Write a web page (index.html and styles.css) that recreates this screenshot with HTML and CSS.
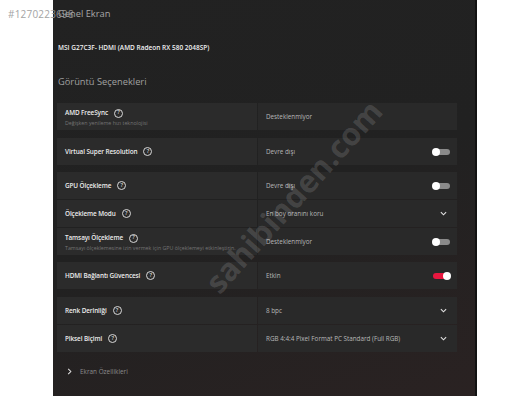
FILE: index.html
```html
<!DOCTYPE html>
<html lang="tr">
<head>
<meta charset="utf-8">
<link rel="stylesheet" href="styles.css">
</head>
<body>
<div class="panel">
  <div class="title">Genel Ekran</div>
  <div class="device">MSI G27C3F- HDMI (AMD Radeon RX 580 2048SP)</div>
  <div class="section">Görüntü Seçenekleri</div>

  <div class="group g8">
    <div class="row">
      <div class="lab two"><div class="name">AMD FreeSync <span class="help">?</span></div><div class="sub">Değişken yenileme hızı teknolojisi</div></div>
      <div class="val"><span>Desteklenmiyor</span></div>
    </div>
  </div>

  <div class="group">
    <div class="row">
      <div class="lab"><div class="name">Virtual Super Resolution <span class="help">?</span></div></div>
      <div class="val"><span>Devre dışı</span><span class="tog"></span></div>
    </div>
  </div>

  <div class="group">
    <div class="row">
      <div class="lab"><div class="name">GPU Ölçekleme <span class="help">?</span></div></div>
      <div class="val"><span>Devre dışı</span><span class="tog"></span></div>
    </div>
    <div class="row">
      <div class="lab"><div class="name">Ölçekleme Modu <span class="help">?</span></div></div>
      <div class="val"><span>En boy oranını koru</span><svg class="chev" viewBox="0 0 8 5"><path d="M1 1 L4 4 L7 1" /></svg></div>
    </div>
    <div class="row">
      <div class="lab two"><div class="name">Tamsayı Ölçekleme <span class="help">?</span></div><div class="sub">Tamsayı ölçeklemesine izin vermek için GPU ölçeklemeyi etkinleştirin.</div></div>
      <div class="val"><span>Desteklenmiyor</span><span class="tog"></span></div>
    </div>
  </div>

  <div class="group g8">
    <div class="row">
      <div class="lab"><div class="name">HDMI Bağlantı Güvencesi <span class="help">?</span></div></div>
      <div class="val"><span>Etkin</span><span class="tog on"></span></div>
    </div>
  </div>

  <div class="group">
    <div class="row">
      <div class="lab"><div class="name">Renk Derinliği <span class="help">?</span></div></div>
      <div class="val"><span>8 bpc</span><svg class="chev" viewBox="0 0 8 5"><path d="M1 1 L4 4 L7 1" /></svg></div>
    </div>
    <div class="row">
      <div class="lab"><div class="name">Piksel Biçimi <span class="help">?</span></div></div>
      <div class="val"><span>RGB 4:4:4 Pixel Format PC Standard (Full RGB)</span><svg class="chev" viewBox="0 0 8 5"><path d="M1 1 L4 4 L7 1" /></svg></div>
    </div>
  </div>

  <div class="more"><svg class="rchev" viewBox="0 0 5 8"><path d="M1 1 L4 4 L1 7" /></svg><span>Ekran Özellikleri</span></div>
</div>
<div class="wm-id">#1270223698</div>
<div class="wm">sahibinden.com</div>
</body>
</html>
```
FILE: styles.css
```css
html, body {
  margin: 0;
  padding: 0;
  background: #ffffff;
  width: 528px;
  height: 396px;
  overflow: hidden;
  font-family: "Open Sans", "Noto Sans", sans-serif;
}
.panel {
  margin-left: 53px;
  width: 418px;
  height: 396px;
  border-right: 2px solid #121212;
  background: linear-gradient(160deg, #222222 0%, #212121 50%, #2a2222 100%);
  padding: 0 0 0 4px;
  box-sizing: content-box;
  display: flex;
  flex-direction: column;
}
.title {
  color: #a8a8a8;
  font-size: 9.3px;
  line-height: 12px;
  margin: 8px 0 0 1px;
}
.device {
  color: #f0f0f0;
  font-size: 6.5px;
  font-weight: 600;
  line-height: 10px;
  margin: 23px 0 0 1px;
}
.section {
  color: #a0a0a0;
  font-size: 9.3px;
  line-height: 12px;
  margin: 23px 0 0 1px;
}
.group {
  width: 400px;
  display: flex;
  flex-direction: column;
  gap: 1px;
  margin-bottom: 7px;
}
.group.g8 { margin-bottom: 8px; }
.section + .group { margin-top: 15px; }
.row {
  display: flex;
  gap: 1px;
  height: 27px;
}
.lab {
  width: 200px;
  background: #2b2b2b;
  display: flex;
  flex-direction: column;
  justify-content: center;
  padding-left: 8px;
  box-sizing: border-box;
}
.lab.two { justify-content: flex-start; padding-top: 5px; }
.name {
  color: #ececec;
  font-size: 6.4px;
  font-weight: 600;
  line-height: 10px;
  letter-spacing: -0.1px;
  display: flex;
  align-items: center;
  white-space: nowrap;
}
.help {
  display: inline-flex;
  align-items: center;
  justify-content: center;
  width: 7px;
  height: 7px;
  border: 1px solid #d8d8d8;
  border-radius: 50%;
  font-size: 5.5px;
  font-weight: 600;
  line-height: 1;
  letter-spacing: 0;
  color: #d8d8d8;
  margin-left: 6px;
}
.sub {
  color: #747474;
  font-size: 5.3px;
  line-height: 8px;
  white-space: nowrap;
  margin-top: 1px;
}
.val {
  flex: 1;
  background: #292929;
  display: flex;
  align-items: center;
  justify-content: space-between;
  padding: 0 6px 0 8px;
  color: #b8b8b8;
  font-size: 6.3px;
  white-space: nowrap;
}
.tog {
  position: relative;
  width: 17px;
  height: 6px;
  border-radius: 3px;
  background: #8a8a8a;
  margin-right: 1px;
}
.tog::after {
  content: "";
  position: absolute;
  left: -1px;
  top: -1px;
  width: 8px;
  height: 8px;
  border-radius: 50%;
  background: #ffffff;
}
.tog.on { background: #e8173f; }
.tog.on::after { left: auto; right: -1px; }
.chev {
  width: 7px;
  height: 5px;
  margin-right: 4px;
  fill: none;
  stroke: #e0e0e0;
  stroke-width: 1.3;
}
.more {
  display: flex;
  align-items: center;
  margin-top: 6px;
  padding-left: 10px;
  height: 12px;
  color: #8c8c8c;
  font-size: 6.4px;
}
.rchev {
  width: 5px;
  height: 7px;
  fill: none;
  stroke: #e0e0e0;
  stroke-width: 1.2;
  margin-right: 8px;
}
.wm-id {
  position: absolute;
  left: 8px;
  top: 7px;
  color: #9a9a9a;
  font-size: 10px;
  font-family: "Open Sans", "Noto Sans", sans-serif;
  letter-spacing: 0.2px;
  opacity: 0.9;
}
.wm {
  position: absolute;
  left: 170px;
  top: 175px;
  transform: rotate(-48deg);
  color: rgba(255, 255, 255, 0.14);
  font-size: 31px;
  font-weight: 700;
  font-family: "Open Sans", "Noto Sans", sans-serif;
  white-space: nowrap;
}
```
